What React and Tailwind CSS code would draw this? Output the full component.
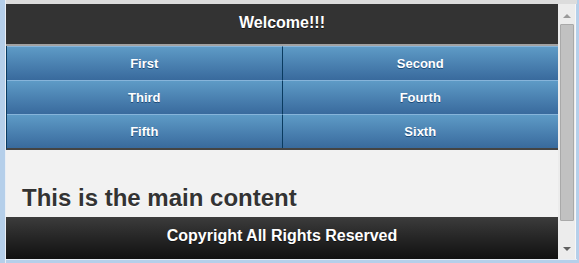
import React from "react";

const NavButton = ({ label, divider }) => (
  <a
    href="#"
    className={
      divider
        ? "flex h-[34px] items-center justify-center border-t border-r border-t-[#86b4da] border-r-[#0a3b60] bg-gradient-to-b from-[#5e9bc6] to-[#396a9d] text-[13px] font-bold text-white [text-shadow:0_1px_0_#1d4c7a]"
        : "flex h-[34px] items-center justify-center border-t border-t-[#86b4da] bg-gradient-to-b from-[#5e9bc6] to-[#396a9d] text-[13px] font-bold text-white [text-shadow:0_1px_0_#1d4c7a]"
    }
  >
    {label}
  </a>
);

const Scrollbar = () => (
  <div className="flex w-[18px] flex-col items-center bg-[#ececec] border-r border-r-[#f7f7f7]">
    <div className="mt-[10px] h-0 w-0 border-x-[4px] border-b-[4px] border-x-transparent border-b-[#9a9a9a]"></div>
    <div className="mt-[6px] h-[197px] w-[14px] rounded-[1px] border border-[#a9a9a9] bg-[#c1c1c1]"></div>
    <div className="mt-auto mb-[8px] h-0 w-0 border-x-[4px] border-t-[4px] border-x-transparent border-t-[#606060]"></div>
  </div>
);

export default function App() {
  return (
    <div className="flex h-[263px] w-[579px] bg-[#b5cfea] font-['Liberation_Sans',Arial,sans-serif]">
      {/* left window edge */}
      <div className="w-[5px] shrink-0"></div>
      <div className="flex flex-1 flex-col border-l border-l-[#e9eef5]">
        <div className="h-[4px] bg-[#dcdcdc]"></div>
        <div className="flex h-[255px]">
          {/* page */}
          <div className="flex w-[552px] flex-col bg-[#f2f2f2]">
            <header className="flex h-[42px] items-center justify-center border-b-2 border-b-[#a2a2a2] bg-[#333333] pb-[2px] text-[16px] font-bold text-white [text-shadow:0_1px_0_#111]">
              Welcome!!!
            </header>
            <nav className="grid grid-cols-2 border-l border-l-[#0a3b60] border-b-2 border-b-[#444]">
              <NavButton label="First" divider />
              <NavButton label="Second" />
              <NavButton label="Third" divider />
              <NavButton label="Fourth" />
              <NavButton label="Fifth" divider />
              <NavButton label="Sixth" />
            </nav>
            <main className="h-[67px] overflow-hidden pl-[16px] pt-[33px]">
              <h2 className="text-[24px] font-bold leading-[29px] text-[#333] [text-shadow:0_1px_0_#fff]">
                This is the main content
              </h2>
            </main>
            <footer className="flex h-[42px] items-center justify-center bg-gradient-to-b from-[#3c3c3c] to-[#111] pb-[4px] text-[16px] font-bold text-white [text-shadow:0_1px_0_#111]">
              Copyright All Rights Reserved
            </footer>
          </div>
          <Scrollbar />
        </div>
        <div className="flex-1 border-t border-t-[#e9eef5]"></div>
      </div>
      <div className="w-[2px] shrink-0"></div>
    </div>
  );
}
